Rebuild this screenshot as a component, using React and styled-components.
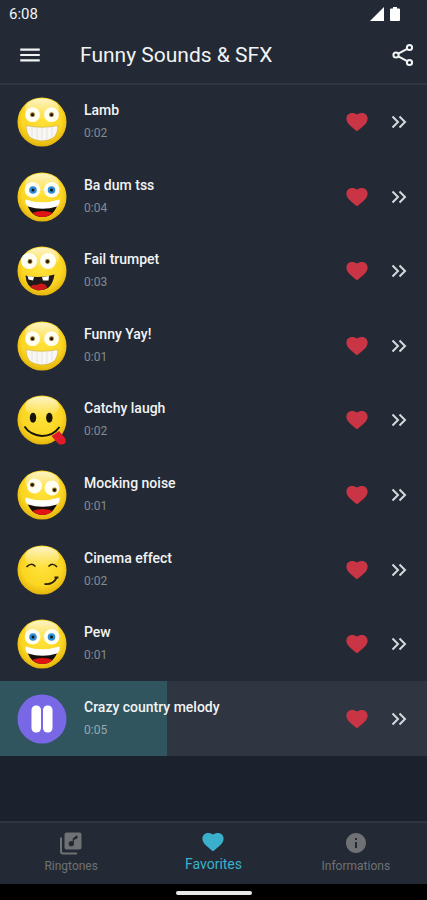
import styled, { createGlobalStyle } from "styled-components"
import { MdInfo, MdMenu } from "react-icons/md"

const panel = "#232a35"
const backdrop = "#1c222d"
const border = "#2e3641"
const accent = "#3bb0cc"
const muted = "#6f7174"

const GlobalStyle = createGlobalStyle`
  * {
    box-sizing: border-box;
  }

  body {
    margin: 0;
    background: ${backdrop};
    color: #f2f3f4;
    font-family: Roboto, "Liberation Sans", sans-serif;
  }

  button {
    padding: 0;
    border: 0;
    background: none;
    color: inherit;
    font: inherit;
    cursor: pointer;
  }
`

const Screen = styled.div`
  display: flex;
  flex-direction: column;
  min-height: 100vh;
`

const StatusBar = styled.div`
  display: flex;
  align-items: center;
  justify-content: space-between;
  height: 28px;
  padding: 0 27px 0 9px;
  background: ${panel};
  font-size: 15px;
  font-weight: 400;
  line-height: 28px;
`

const StatusIcons = styled.div`
  display: flex;
  align-items: center;
  gap: 6px;
`

const Header = styled.header`
  display: flex;
  align-items: center;
  height: 57px;
  padding: 0 10px 2px 16px;
  background: ${panel};
  border-bottom: 2px solid ${border};
`

const HeaderButton = styled.button`
  display: flex;
  align-items: center;
  justify-content: center;
  width: 28px;
  height: 28px;
`

const Title = styled.h1`
  flex: 1;
  margin: 0 0 0 36px;
  font-size: 21px;
  font-weight: 400;
  line-height: 28px;
`

const Main = styled.main`
  flex: 1;
`

const SoundList = styled.ul`
  display: grid;
  grid-auto-rows: 1fr;
  min-height: 671px;
  margin: 0;
  padding: 0;
  list-style: none;
`

const SoundRow = styled.li`
  position: relative;
  display: flex;
  align-items: center;
  padding: 0 14px 0 17px;
  background: ${({ $active }) => ($active ? "#2f3541" : panel)};
`

const Progress = styled.div`
  position: absolute;
  top: 0;
  bottom: 0;
  left: 0;
  background: #30555f;
`

const PlayButton = styled.button`
  position: relative;
  width: 50px;
  height: 50px;

  svg {
    display: block;
  }
`

const SoundText = styled.div`
  position: relative;
  flex: 1;
  margin-left: 17px;
`

const SoundName = styled.div`
  font-size: 14px;
  font-weight: 500;
  line-height: 22px;
`

const Duration = styled.div`
  color: ${({ $active }) => ($active ? "#94a9b0" : "#858a92")};
  font-size: 12px;
  line-height: 24px;
`

const RowActions = styled.div`
  display: flex;
  gap: 14px;
`

const RowButton = styled.button`
  display: flex;
  align-items: center;
  justify-content: center;
  width: 28px;
  height: 28px;
`

const Nav = styled.nav`
  display: grid;
  grid-template-columns: repeat(3, 1fr);
  height: 63px;
  background: ${panel};
  border-top: 2px solid ${border};
`

const NavLink = styled.a`
  display: flex;
  flex-direction: column;
  align-items: center;
  padding-top: 8px;
  color: ${({ $active }) => ($active ? accent : muted)};
  font-size: ${({ $active }) => ($active ? "14px" : "12px")};
  line-height: 22px;
  text-decoration: none;

  svg {
    display: block;
    height: ${({ $active }) => ($active ? "22px" : "24px")};
  }
`

const HomeBar = styled.div`
  display: flex;
  justify-content: center;
  height: 16px;
  padding-top: 7px;
  background: #000;

  &::after {
    content: "";
    width: 76px;
    height: 4px;
    border-radius: 2px;
    background: #e8e8e8;
  }
`

const HeartIcon = ({ color, size = 22 }) => (
  <svg width={size} height={size} viewBox="0 0 22 22" fill={color}>
    <path d="M11 20.3C9.600 19.400 4 14.800 2.200 12.600C1 11 .4 9.500 .4 7.600C.4 4.200 2.800 1.900 6 1.900C8 1.900 9.800 2.600 11 3.600C12.200 2.600 14 1.900 16 1.900C19.200 1.900 21.600 4.200 21.600 7.600C21.600 9.500 21 11 19.800 12.600C18 14.800 12.400 19.400 11 20.300Z" />
  </svg>
)

const ShareIcon = () => (
  <svg width="24" height="24" viewBox="0 0 24 24" fill="none" stroke="currentColor" strokeWidth="2">
    <circle cx="18.500" cy="4.500" r="2.600" />
    <circle cx="5" cy="12" r="2.600" />
    <circle cx="18.500" cy="19.500" r="2.600" />
    <path d="M7.300 10.700L16.200 5.800M7.300 13.300L16.200 18.200" />
  </svg>
)

const ChevronsIcon = () => (
  <svg width="18" height="16" viewBox="0 0 18 16" fill="none" stroke="#d5d9dd" strokeWidth="2">
    <path d="M2.500 2.500L8 8L2.500 13.500M9.500 2.500L15 8L9.500 13.500" />
  </svg>
)

const LibraryIcon = () => (
  <svg width="24" height="24" viewBox="0 0 24 24">
    <path d="M2 6.500V20.500Q2 22.500 4 22.500H18" fill="none" stroke="currentColor" strokeWidth="2" />
    <rect x="5.500" y="1.500" width="17" height="17" rx="2" fill="currentColor" />
    <circle cx="12.300" cy="12.700" r="2.600" fill={panel} />
    <path d="M14.200 12.700V7.500L18 4.800V7.200L15.300 8.300" fill={panel} stroke={panel} />
  </svg>
)

const Eyes = ({ left, right, r = 7.4, iris, pupils = [left, right] }) => (
  <>
    {[left, right].map(([x, y]) => (
      <circle key={x} cx={x} cy={y} r={r} fill="#fffef2" />
    ))}
    {pupils.map(([x, y]) => (
      <g key={x}>
        <circle cx={x} cy={y} r={iris ? 3.8 : 2.4} fill={iris || "#96711c"} />
        <circle cx={x} cy={y} r="1.5" fill="#1d1606" />
      </g>
    ))}
  </>
)

const LaughMouth = () => (
  <>
    <path d="M10 32Q25 38 41 32Q36 45 25.500 45Q14 45 10 32Z" fill="#16100c" />
    <path d="M15 41Q25.500 37 36 41Q31 45 25.500 45Q20 45 15 41Z" fill="#e01414" />
    <path d="M8.500 27.500Q25 33 42.500 27.500Q43 32 40 34.500Q25.500 39 11 34.500Q8 32 8.500 27.500Z" fill="#fff" />
  </>
)

const features = {
  grin: (
    <>
      <Eyes left={[15.5, 17.7]} right={[34.5, 17.7]} />
      <path
        d="M9 28.500Q25 32 41 28.500Q41 37 36 41Q31 44 25 44Q19 44 14 41Q9 37 9 28.500Z"
        fill="#f8f7f5"
        stroke="#c9a52c"
        strokeWidth=".6"
      />
      <path d="M15 30V40M20 31V43M25 31V43M30 31V43M35 30V40" stroke="#d8d6d2" strokeWidth=".6" />
    </>
  ),
  laugh: (
    <>
      <Eyes left={[15.5, 17.7]} right={[34.7, 17.7]} pupils={[[16, 18], [34.5, 18]]} r={7.8} iris="#2d8ddb" />
      <LaughMouth />
    </>
  ),
  toothy: (
    <>
      <Eyes left={[12, 15]} right={[31, 15]} pupils={[[13, 15.5], [30.5, 15.5]]} r={8} />
      <path d="M8.500 29.500Q22 33 37.500 28.500Q36 38 31 42Q26 45 19 44Q9 41 8.500 29.500Z" fill="#211a18" />
      <path d="M13 41Q16 38 20 39Q24 36 29 39L30 42Q26 45 19 44Z" fill="#cb1919" />
      <path d="M10.500 30L17 31L16 34.500L11.500 33.500ZM25 31L32 30L31.500 34.500L26 34.500Z" fill="#fff" />
    </>
  ),
  tongue: (
    <>
      <ellipse cx="16" cy="22.700" rx="3.200" ry="5" fill="#17140b" />
      <ellipse cx="32.300" cy="22.700" rx="3.200" ry="5" fill="#17140b" />
      <path d="M34.500 41L42 36L48 43Q50 47 47 49Q43 50.500 40.500 48Z" fill="#e11b28" />
      <path d="M7.500 31.500Q13 40 25 41Q36 41 42.500 32" fill="none" stroke="#17140b" strokeWidth="2" />
    </>
  ),
  crazy: (
    <>
      <Eyes left={[17.5, 16]} right={[35, 18]} pupils={[[15.3, 14.8], [37.5, 20]]} />
      <LaughMouth />
    </>
  ),
  smirk: (
    <g fill="none" stroke="#292109" strokeWidth="1.500">
      <path d="M9.500 22Q14 17 18.500 21.500M31.500 21.500Q36 17 40 22" />
      <path d="M27.500 39Q36 40 39.500 33M37.500 32.500L41.500 32.500" strokeWidth="1.800" />
    </g>
  ),
}

const FaceIcon = ({ face, id }) => (
  <svg width="50" height="50" viewBox="0 0 50 50">
    <defs>
      <radialGradient id={`skin-${id}`} cx=".5" cy=".42" r=".58">
        <stop offset="0" stopColor="#ffe23c" />
        <stop offset=".7" stopColor="#fbd622" />
        <stop offset="1" stopColor="#e4b30c" />
      </radialGradient>
      <linearGradient id={`shine-${id}`} x1="0" y1="0" x2="0" y2="1">
        <stop offset="0" stopColor="#fff" stopOpacity=".75" />
        <stop offset="1" stopColor="#fff" stopOpacity="0" />
      </linearGradient>
    </defs>
    <circle cx="25" cy="25" r="24.500" fill={`url(#skin-${id})`} />
    <ellipse cx="25" cy="12" rx="17" ry="10.500" fill={`url(#shine-${id})`} />
    {features[face]}
  </svg>
)

const PauseIcon = () => (
  <svg width="50" height="50" viewBox="0 0 50 50">
    <circle cx="25" cy="25" r="24.500" fill="#7968e6" />
    <rect x="14.500" y="11.500" width="9.500" height="27" rx="4.500" fill="#fff" />
    <rect x="26" y="11.500" width="9.500" height="27" rx="4.500" fill="#fff" />
  </svg>
)

const sounds = [
  { name: "Lamb", duration: "0:02", face: "grin" },
  { name: "Ba dum tss", duration: "0:04", face: "laugh" },
  { name: "Fail trumpet", duration: "0:03", face: "toothy" },
  { name: "Funny Yay!", duration: "0:01", face: "grin" },
  { name: "Catchy laugh", duration: "0:02", face: "tongue" },
  { name: "Mocking noise", duration: "0:01", face: "crazy" },
  { name: "Cinema effect", duration: "0:02", face: "smirk" },
  { name: "Pew", duration: "0:01", face: "laugh" },
  { name: "Crazy country melody", duration: "0:05", progress: 39 },
]

const Sound = ({ sound, id }) => {
  const active = sound.progress !== undefined

  return (
    <SoundRow $active={active}>
      {active && <Progress style={{ width: `${sound.progress}%` }} />}
      <PlayButton type="button" aria-label={`${active ? "Pause" : "Play"} ${sound.name}`}>
        {active ? <PauseIcon /> : <FaceIcon face={sound.face} id={id} />}
      </PlayButton>
      <SoundText>
        <SoundName>{sound.name}</SoundName>
        <Duration $active={active}>{sound.duration}</Duration>
      </SoundText>
      <RowActions>
        <RowButton type="button" aria-label="Remove from favorites">
          <HeartIcon color="#c93545" />
        </RowButton>
        <RowButton type="button" aria-label="More options">
          <ChevronsIcon />
        </RowButton>
      </RowActions>
    </SoundRow>
  )
}

const App = () => {
  return (
    <Screen>
      <GlobalStyle />
      <StatusBar>
        <span>6:08</span>
        <StatusIcons>
          <svg width="14" height="14" viewBox="0 0 14 14" fill="#fff">
            <path d="M14 0V14H0Z" />
          </svg>
          <svg width="10" height="14" viewBox="0 0 10 14" fill="#fff">
            <path d="M3 0H7V1.500H9Q10 1.500 10 2.500V13Q10 14 9 14H1Q0 14 0 13V2.500Q0 1.500 1 1.500H3Z" />
          </svg>
        </StatusIcons>
      </StatusBar>
      <Header>
        <HeaderButton type="button" aria-label="Menu">
          <MdMenu size={26} />
        </HeaderButton>
        <Title>Funny Sounds &amp; SFX</Title>
        <HeaderButton type="button" aria-label="Share">
          <ShareIcon />
        </HeaderButton>
      </Header>
      <Main>
        <SoundList>
          {sounds.map((sound, i) => (
            <Sound key={sound.name} sound={sound} id={i} />
          ))}
        </SoundList>
      </Main>
      <Nav>
        <NavLink href="#ringtones">
          <LibraryIcon />
          Ringtones
        </NavLink>
        <NavLink href="#favorites" $active aria-current="page">
          <HeartIcon color="currentColor" />
          Favorites
        </NavLink>
        <NavLink href="#informations">
          <MdInfo size={26} />
          Informations
        </NavLink>
      </Nav>
      <HomeBar />
    </Screen>
  )
}

export default App
